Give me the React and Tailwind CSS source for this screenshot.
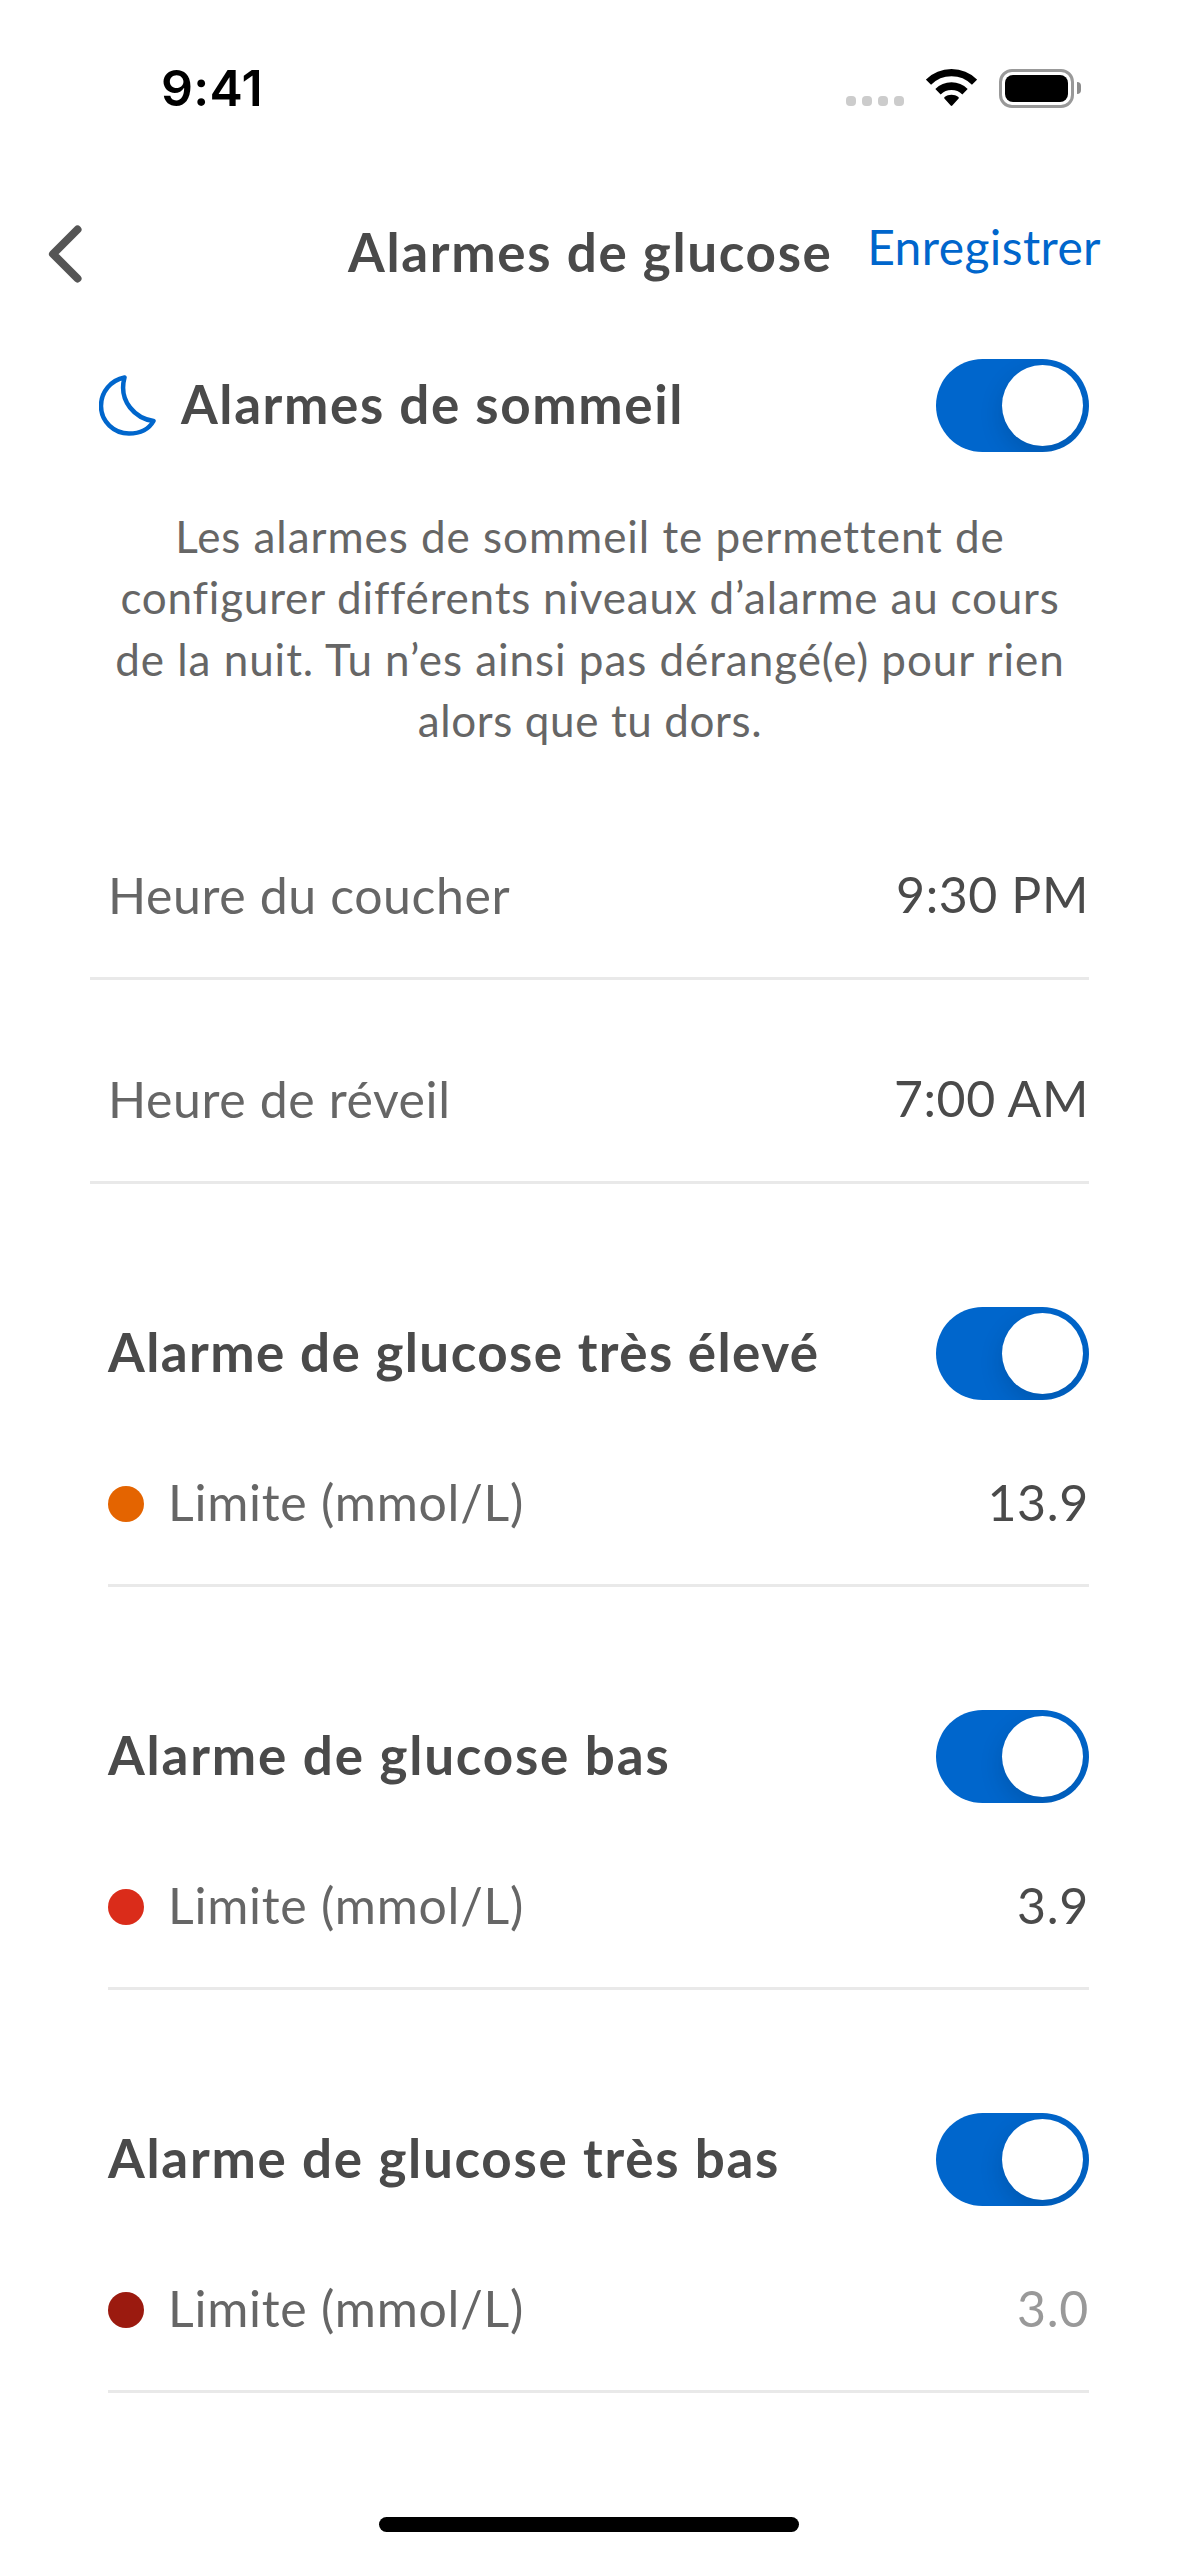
import React from 'react';

const alarms = [
  { title: 'Alarme de glucose très élevé', titleClass: 'tracking-[1.4px]', dot: 'bg-[#e46400]', value: '13.9', valueClass: 'text-[#4a4a4a]' },
  { title: 'Alarme de glucose bas', titleClass: 'tracking-[1.8px]', dot: 'bg-[#da2c1a]', value: '3.9', valueClass: 'text-[#4a4a4a]' },
  { title: 'Alarme de glucose très bas', titleClass: 'tracking-[1.7px]', dot: 'bg-[#9b1a0f]', value: '3.0', valueClass: 'text-[#999999]' },
];

const Toggle = () => (
  <button type="button" role="switch" aria-checked="true" className="flex h-[93px] w-[153px] shrink-0 items-center justify-end overflow-hidden rounded-full bg-[#0066cc] pr-[6px]">
    <span className="h-[81px] w-[81px] rounded-full bg-white shadow-[0_9px_24px_rgba(0,0,0,0.14)]"></span>
  </button>
);

const StatusBar = () => (
  <div className="flex h-[176px] items-center justify-between pl-[161px] pr-[97px]">
    <p className="font-[Inter] text-[50px] font-semibold leading-[60px] tracking-[0.3px] text-black">9:41</p>
    <div className="flex items-center">
      <div className="mt-[26px] flex gap-[6px]">
        <span className="h-[10px] w-[10px] rounded-[4px] bg-[#cccccc]"></span>
        <span className="h-[10px] w-[10px] rounded-[4px] bg-[#cccccc]"></span>
        <span className="h-[10px] w-[10px] rounded-[4px] bg-[#cccccc]"></span>
        <span className="h-[10px] w-[10px] rounded-[4px] bg-[#cccccc]"></span>
      </div>
      <svg className="ml-[22px]" width="51" height="38" viewBox="0 0 51 38" fill="none">
        <path d="M2.5 13.2a32.5 32.5 0 0 1 46 0" stroke="#000" strokeWidth="7.2" />
        <path d="M12 22.7a19.2 19.2 0 0 1 27 0" stroke="#000" strokeWidth="7.6" />
        <path d="M18.6 29.7a1.2 1.2 0 0 1 0-1.8c4-3 9.8-3 13.8 0a1.2 1.2 0 0 1 0 1.8l-6.1 6.8a1.1 1.1 0 0 1-1.6 0z" fill="#000" />
      </svg>
      <div className="ml-[22px] h-[39px] w-[75px] rounded-[13px] border-[3px] border-[#999999] p-[3px]">
        <div className="h-full w-full rounded-[8px] bg-black"></div>
      </div>
      <div className="ml-[3px] h-[12px] w-[4px] rounded-r-full bg-[#8c8c8c]"></div>
    </div>
  </div>
);

const Header = () => (
  <header className="flex h-[149px] items-center pl-[48px] pr-[77px]">
    <svg className="mt-[6px]" width="34" height="58" viewBox="0 0 34 58" fill="none">
      <path d="M29.5 4.5L5 29l24.5 24.5" stroke="#555555" strokeWidth="8" strokeLinecap="round" strokeLinejoin="round" />
    </svg>
    <h1 className="ml-[266px] mt-[2px] whitespace-nowrap text-[53px] font-bold leading-[64px] tracking-[1.65px] text-[#4a4a4a]">Alarmes de glucose</h1>
    <button type="button" className="mb-[7px] ml-auto text-[48px] leading-[58px] tracking-[0.4px] text-[#0066cc]">Enregistrer</button>
  </header>
);

const TimeRow = ({ label, value }) => (
  <div className="flex h-[204px] items-center justify-between border-b-[3px] border-[#e9e9e9] pl-[18px] pt-[37px]">
    <p className="text-[50px] leading-[60px] tracking-[0.6px] text-[#666666]">{label}</p>
    <p className="mb-[2px] text-[50px] leading-[60px] tracking-[0.6px] text-[#4a4a4a]">{value}</p>
  </div>
);

const App = () => {
  return (
    <div className="h-[2556px] w-[1178px] overflow-hidden bg-white font-[Lato,sans-serif]">
      <StatusBar />
      <Header />

      {/* Sleep alarms */}
      <div className="mt-[34px] flex items-center pl-[99px] pr-[89px]">
        <svg width="58" height="61" viewBox="0 0 58 61" fill="none">
          <path d="M25.5 2.5C12 5 2 17 2 31c0 15.5 13 27.5 28 27.5C41 58.5 50 54 54.5 46 37 43.5 19 27 25.5 2.500Z" stroke="#0066cc" strokeWidth="4.5" strokeLinejoin="round" />
        </svg>
        <h2 className="mb-[3px] ml-[24px] text-[53px] font-bold leading-[64px] tracking-[1.6px] text-[#4a4a4a]">Alarmes de sommeil</h2>
        <div className="ml-auto">
          <Toggle />
        </div>
      </div>
      <p className="mt-[54px] h-[245px] whitespace-nowrap pl-[2px] text-center text-[44px] leading-[61.3px] tracking-[0.95px] text-[#666666]">
        Les alarmes de sommeil te permettent de<br />
        <span className="tracking-[0.8px]">configurer différents niveaux d’alarme au cours</span><br />
        de la nuit. Tu n’es ainsi pas dérangé(e) pour rien<br />
        <span className="tracking-[0.6px]">alors que tu dors.</span>
      </p>

      {/* Bedtime and wake-up time */}
      <div className="mt-[25px] pl-[90px] pr-[89px]">
        <TimeRow label="Heure du coucher" value="9:30 PM" />
        <TimeRow label="Heure de réveil" value="7:00 AM" />
      </div>

      {alarms.map((alarm) => (
        <section key={alarm.title} className="mt-[123px] pl-[108px] pr-[89px]">
          <div className="flex items-center justify-between">
            <h2 className={`mb-[4px] text-[53px] font-bold leading-[64px] text-[#4a4a4a] ${alarm.titleClass}`}>{alarm.title}</h2>
            <Toggle />
          </div>
          <div className="flex h-[187px] items-center border-b-[3px] border-[#e9e9e9] pt-[20px]">
            <span className={`mt-[4px] h-[36px] w-[36px] rounded-full ${alarm.dot}`}></span>
            <p className="ml-[24px] text-[50px] leading-[60px] tracking-[0.75px] text-[#666666]">Limite (mmol/L)</p>
            <p className={`ml-auto text-[50px] leading-[60px] tracking-[0.7px] ${alarm.valueClass}`}>{alarm.value}</p>
          </div>
        </section>
      ))}

      {/* Home indicator */}
      <div className="mx-auto mt-[124px] h-[15px] w-[420px] rounded-full bg-black"></div>
    </div>
  );
};

export default App;
